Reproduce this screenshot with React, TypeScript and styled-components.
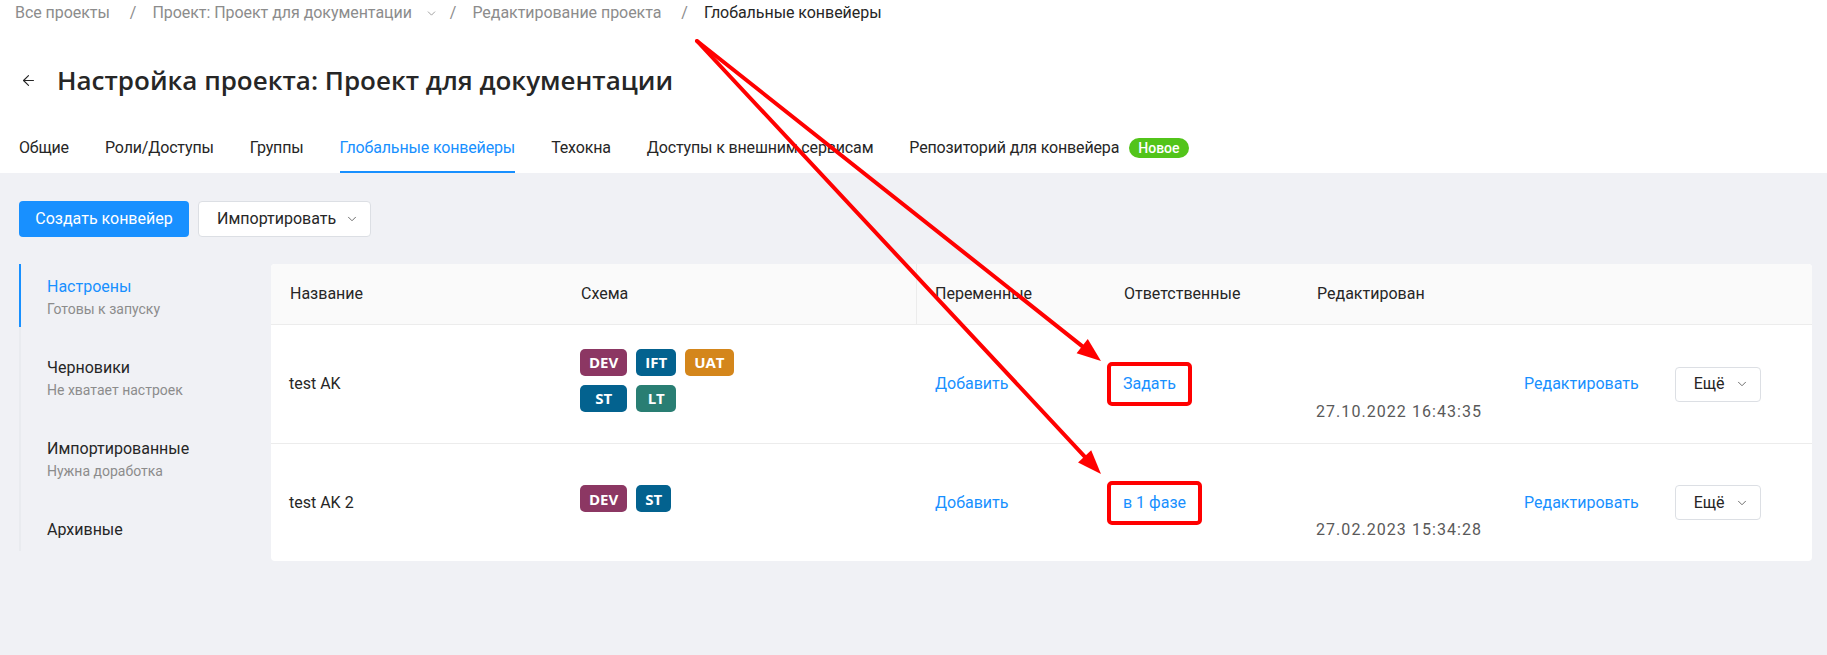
import React from "react";
import styled, { createGlobalStyle } from "styled-components";
import { ArrowLeft, ChevronDown } from "lucide-react";

const GlobalStyle = createGlobalStyle`
  html, body { margin: 0; padding: 0; background: #ffffff; }
  body {
    font-family: Roboto, "Open Sans", sans-serif;
    color: #262626;
    font-size: 16px;
    line-height: 22px;
  }
  * { box-sizing: border-box; }
`;

const Page = styled.div`
  position: relative;
  min-height: 100vh;
  display: flex;
  flex-direction: column;
`;

const Header = styled.header`
  background: #ffffff;
  padding: 0 0 0 15px;
`;

const Breadcrumbs = styled.nav`
  height: 26px;
  display: flex;
  align-items: center;
  letter-spacing: -0.05px;
`;

const Crumb = styled.span<{ $current?: boolean }>`
  color: ${(p) => (p.$current ? "#262626" : "#8c8c8c")};
  display: inline-flex;
  align-items: center;
  white-space: nowrap;
`;

const CrumbChevron = styled.span`
  display: inline-flex;
  margin: 0 -8px 0 13px;
  color: #8c8c8c;
`;

const Sep = styled.span`
  color: #8c8c8c;
  margin: 0 16px 0 20px;
`;

const TitleRow = styled.div`
  margin-top: 36px;
  height: 36px;
  display: flex;
  align-items: center;
  gap: 20px;
  padding-left: 5px;
`;

const BackButton = styled.span`
  display: inline-flex;
  color: #262626;
`;

const Title = styled.h1`
  margin: 0;
  font-family: "Open Sans", Roboto, sans-serif;
  font-size: 26px;
  line-height: 36px;
  font-weight: 600;
  color: #262626;
`;

const Tabs = styled.div`
  margin-top: 38px;
  display: flex;
  align-items: flex-end;
  gap: 36px;
  padding-left: 4px;
`;

const Tab = styled.div<{ $active?: boolean }>`
  display: flex;
  align-items: center;
  gap: 10px;
  line-height: 24px;
  padding-bottom: 11px;
  letter-spacing: -0.15px;
  border-bottom: 2px solid ${(p) => (p.$active ? "#1890ff" : "transparent")};
  color: ${(p) => (p.$active ? "#1890ff" : "#262626")};
  white-space: nowrap;
`;

const NewBadge = styled.span`
  display: inline-flex;
  align-items: center;
  height: 20px;
  padding: 0 9px;
  border-radius: 10px;
  background: #52c41a;
  color: #ffffff;
  font-size: 14px;
  font-weight: 500;
  letter-spacing: 0;
`;

const Main = styled.main`
  flex: 1;
  background: #f0f1f5;
  padding: 28px 15px 40px 19px;
`;

const Toolbar = styled.div`
  display: flex;
  gap: 9px;
`;

const PrimaryButton = styled.button`
  height: 36px;
  width: 170px;
  padding: 0;
  border: none;
  border-radius: 4px;
  background: #1890ff;
  color: #ffffff;
  font: inherit;
  cursor: pointer;
`;

const DefaultButton = styled.button`
  height: 36px;
  width: 173px;
  display: inline-flex;
  align-items: center;
  gap: 9px;
  padding: 0 0 0 18px;
  border: 1px solid #dcdfe4;
  border-radius: 4px;
  background: #ffffff;
  color: #262626;
  font: inherit;
  cursor: pointer;
`;

const Content = styled.div`
  margin-top: 27px;
  display: flex;
  align-items: flex-start;
`;

const SideMenu = styled.ul`
  width: 252px;
  margin: 0;
  padding: 0 0 3px 0;
  list-style: none;
  border-left: 2px solid #e9ebef;
  display: flex;
  flex-direction: column;
  gap: 18px;
`;

const MenuItem = styled.li<{ $active?: boolean }>`
  margin-left: -2px;
  padding: 12px 0 7px 26px;
  border-left: 2px solid ${(p) => (p.$active ? "#1890ff" : "transparent")};
`;

const MenuTitle = styled.div<{ $active?: boolean }>`
  color: ${(p) => (p.$active ? "#1890ff" : "#262626")};
  line-height: 22px;
`;

const MenuSub = styled.div`
  color: #8c8c8c;
  font-size: 14px;
  line-height: 22px;
`;

const TableCard = styled.div`
  flex: 1;
  background: #ffffff;
  border-radius: 4px;
  overflow: hidden;
`;

const columns = "291px 355px 188px 193px 208px 1fr";

const HeadRow = styled.div`
  display: grid;
  grid-template-columns: ${columns};
  height: 61px;
  background: #fafafa;
  border-bottom: 1px solid #ececec;
`;

const HeadCell = styled.div<{ $divider?: boolean }>`
  display: flex;
  align-items: center;
  padding: 0 18px;
  border-left: 1px solid ${(p) => (p.$divider ? "#ececec" : "transparent")};
  margin-left: ${(p) => (p.$divider ? "-1px" : "0")};
`;

const Row = styled.div`
  display: grid;
  grid-template-columns: ${columns};
  height: 118px;
  & + & { border-top: 1px solid #ececec; }
`;

const Cell = styled.div`
  display: flex;
  align-items: center;
  padding: 0 18px;
`;

const DateCell = styled(Cell)`
  align-self: end;
  padding-bottom: 20px;
  color: #595959;
  letter-spacing: 1.05px;
  white-space: nowrap;
`;

const ActionCell = styled(Cell)`
  gap: 36px;
`;

const TagGrid = styled.div`
  display: grid;
  grid-template-columns: repeat(3, max-content);
  gap: 9px;
  margin-bottom: 8px;
`;

const Tag = styled.span<{ $bg: string }>`
  display: inline-flex;
  align-items: center;
  justify-content: center;
  height: 27px;
  padding: 0 9px;
  border-radius: 5px;
  background: ${(p) => p.$bg};
  color: #ffffff;
  font-family: "Open Sans", Roboto, sans-serif;
  font-size: 15px;
  font-weight: 700;
`;

const Link = styled.a`
  color: #1890ff;
  text-decoration: none;
  white-space: nowrap;
  cursor: pointer;
`;

const Marked = styled(Link)`
  position: relative;
  &::after {
    content: "";
    position: absolute;
    left: -16px;
    right: -16px;
    top: -11px;
    bottom: -11px;
    border: 4px solid #ff0000;
    border-radius: 5px;
  }
`;

const MoreButton = styled.button`
  height: 35px;
  width: 86px;
  display: inline-flex;
  align-items: center;
  gap: 10px;
  padding: 0 0 0 18px;
  border: 1px solid #dcdfe4;
  border-radius: 4px;
  background: #ffffff;
  color: #262626;
  font: inherit;
  cursor: pointer;
`;

const ArrowLayer = styled.svg`
  position: absolute;
  left: 0;
  top: 0;
  width: 100%;
  height: 100%;
  pointer-events: none;
  overflow: visible;
`;

const TAG_COLORS: Record<string, string> = {
  DEV: "#8c3763",
  IFT: "#03628f",
  UAT: "#d4861b",
  ST: "#03628f",
  LT: "#297e73",
};

type Pipeline = {
  name: string;
  tags: string[];
  owners: string;
  edited: string;
};

const rows: Pipeline[] = [
  { name: "test AK", tags: ["DEV", "IFT", "UAT", "ST", "LT"], owners: "Задать", edited: "27.10.2022 16:43:35" },
  { name: "test AK 2", tags: ["DEV", "ST"], owners: "в 1 фазе", edited: "27.02.2023 15:34:28" },
];

const menu = [
  { title: "Настроены", sub: "Готовы к запуску", active: true },
  { title: "Черновики", sub: "Не хватает настроек" },
  { title: "Импортированные", sub: "Нужна доработка" },
  { title: "Архивные" },
];

const tabs = [
  "Общие",
  "Роли/Доступы",
  "Группы",
  "Глобальные конвейеры",
  "Техокна",
  "Доступы к внешним сервисам",
];

const START = { x: 697, y: 41 };
const TIPS = [
  { x: 1101, y: 361 },
  { x: 1101, y: 474 },
];

function arrow(tip: { x: number; y: number }) {
  const dx = tip.x - START.x;
  const dy = tip.y - START.y;
  const len = Math.hypot(dx, dy);
  const ux = dx / len;
  const uy = dy / len;
  const L = 24;
  const W = 9;
  const bx = tip.x - ux * L;
  const by = tip.y - uy * L;
  const nx = -uy;
  const ny = ux;
  const head = `${tip.x},${tip.y} ${bx + nx * W},${by + ny * W} ${bx - nx * W},${by - ny * W}`;
  return { lineEnd: { x: tip.x - ux * 14, y: tip.y - uy * 14 }, head };
}

export default function App() {
  return (
    <Page>
      <GlobalStyle />
      <Header>
        <Breadcrumbs>
          <Crumb>Все проекты</Crumb>
          <Sep>/</Sep>
          <Crumb>
            Проект: Проект для документации
            <CrumbChevron>
              <ChevronDown size={13} strokeWidth={1.5} />
            </CrumbChevron>
          </Crumb>
          <Sep>/</Sep>
          <Crumb>Редактирование проекта</Crumb>
          <Sep>/</Sep>
          <Crumb $current>Глобальные конвейеры</Crumb>
        </Breadcrumbs>
        <TitleRow>
          <BackButton>
            <ArrowLeft size={17} strokeWidth={1.6} />
          </BackButton>
          <Title>Настройка проекта: Проект для документации</Title>
        </TitleRow>
        <Tabs>
          {tabs.map((t) => (
            <Tab key={t} $active={t === "Глобальные конвейеры"}>
              {t}
            </Tab>
          ))}
          <Tab>
            Репозиторий для конвейера
            <NewBadge>Новое</NewBadge>
          </Tab>
        </Tabs>
      </Header>
      <Main>
        <Toolbar>
          <PrimaryButton>Создать конвейер</PrimaryButton>
          <DefaultButton>
            Импортировать
            <ChevronDown size={14} strokeWidth={1.5} color="#595959" />
          </DefaultButton>
        </Toolbar>
        <Content>
          <SideMenu>
            {menu.map((m) => (
              <MenuItem key={m.title} $active={m.active}>
                <MenuTitle $active={m.active}>{m.title}</MenuTitle>
                {m.sub && <MenuSub>{m.sub}</MenuSub>}
              </MenuItem>
            ))}
          </SideMenu>
          <TableCard>
            <HeadRow>
              <HeadCell>Название</HeadCell>
              <HeadCell>Схема</HeadCell>
              <HeadCell $divider>Переменные</HeadCell>
              <HeadCell>Ответственные</HeadCell>
              <HeadCell>Редактирован</HeadCell>
              <HeadCell />
            </HeadRow>
            {rows.map((r) => (
              <Row key={r.name}>
                <Cell>{r.name}</Cell>
                <Cell>
                  <TagGrid>
                    {r.tags.map((t) => (
                      <Tag key={t} $bg={TAG_COLORS[t]}>
                        {t}
                      </Tag>
                    ))}
                  </TagGrid>
                </Cell>
                <Cell>
                  <Link>Добавить</Link>
                </Cell>
                <Cell>
                  <Marked>{r.owners}</Marked>
                </Cell>
                <DateCell>{r.edited}</DateCell>
                <ActionCell>
                  <Link>Редактировать</Link>
                  <MoreButton>
                    Ещё
                    <ChevronDown size={14} strokeWidth={1.5} color="#595959" />
                  </MoreButton>
                </ActionCell>
              </Row>
            ))}
          </TableCard>
        </Content>
      </Main>
      <ArrowLayer>
        {TIPS.map((tip, i) => {
          const a = arrow(tip);
          return (
            <g key={i}>
              <line
                x1={START.x}
                y1={START.y}
                x2={a.lineEnd.x}
                y2={a.lineEnd.y}
                stroke="#ff0000"
                strokeWidth={4}
                strokeLinecap="round"
              />
              <polygon points={a.head} fill="#ff0000" />
            </g>
          );
        })}
      </ArrowLayer>
    </Page>
  );
}
